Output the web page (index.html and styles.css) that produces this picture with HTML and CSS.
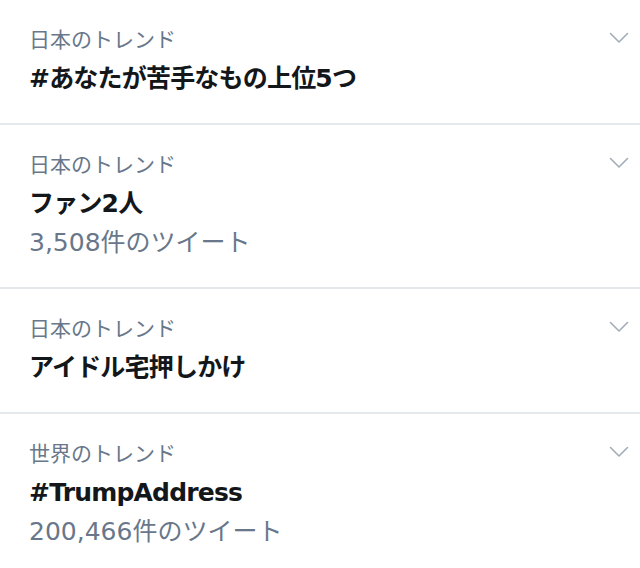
FILE: index.html
```html
<!DOCTYPE html>
<html lang="ja">
<head>
    <meta charset="utf-8">
    <title>トレンド</title>
    <link rel="stylesheet" href="styles.css">
</head>
<body>
    <ul class="trends">
        <li class="trend">
            <div class="trend-body">
                <div class="trend-place">日本のトレンド</div>
                <div class="trend-name">#あなたが苦手なもの上位5つ</div>
            </div>
            <svg class="caret" viewBox="0 0 20 12" width="20" height="12"><path d="M1.5 1.5 L10 10 L18.5 1.5"/></svg>
        </li>
        <li class="trend">
            <div class="trend-body">
                <div class="trend-place">日本のトレンド</div>
                <div class="trend-name">ファン2人</div>
                <div class="trend-count">3,508件のツイート</div>
            </div>
            <svg class="caret" viewBox="0 0 20 12" width="20" height="12"><path d="M1.5 1.5 L10 10 L18.5 1.5"/></svg>
        </li>
        <li class="trend">
            <div class="trend-body">
                <div class="trend-place">日本のトレンド</div>
                <div class="trend-name">アイドル宅押しかけ</div>
            </div>
            <svg class="caret" viewBox="0 0 20 12" width="20" height="12"><path d="M1.5 1.5 L10 10 L18.5 1.5"/></svg>
        </li>
        <li class="trend">
            <div class="trend-body">
                <div class="trend-place">世界のトレンド</div>
                <div class="trend-name">#TrumpAddress</div>
                <div class="trend-count">200,466件のツイート</div>
            </div>
            <svg class="caret" viewBox="0 0 20 12" width="20" height="12"><path d="M1.5 1.5 L10 10 L18.5 1.5"/></svg>
        </li>
    </ul>
</body>
</html>
```

FILE: styles.css
```css
html,body{
    margin: 0;
    padding: 0;
    background: #fff;
    font-family: "DejaVu Sans", "Noto Sans CJK JP", sans-serif;
}

.trends{
    list-style: none;
    margin: 0;
    padding: 0;
}

.trend{
    display: flex;
    justify-content: space-between;
    align-items: flex-start;
    padding: 21px 11px 25px 29px;
    border-bottom: 2px solid #e6e9eb;
}

.trend-place{
    height: 38px;
    line-height: 38px;
    font-size: 21px;
    color: #68778a;
    white-space: nowrap;
}

.trend-name,
.trend-count{
    height: 39px;
    line-height: 40px;
    font-size: 25px;
    white-space: nowrap;
}

.trend-name{
    font-weight: bold;
    letter-spacing: -0.8px;
    color: #14171a;
}

.trend-count{
    color: #68778a;
}

.caret{
    margin-top: 11px;
    fill: none;
    stroke: #a3adb8;
    stroke-width: 1.6;
    stroke-linecap: round;
    stroke-linejoin: round;
}
```
